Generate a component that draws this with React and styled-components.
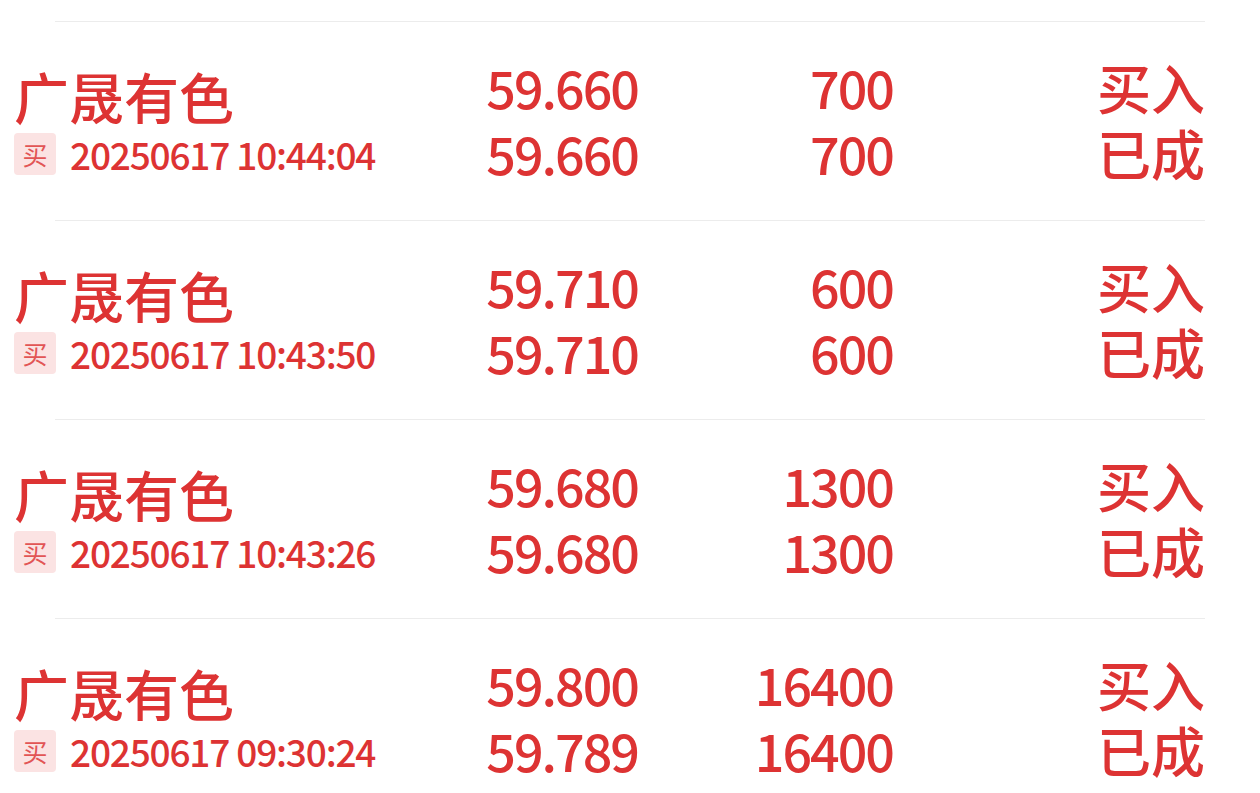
import React from "react";
import styled, { createGlobalStyle } from "styled-components";

const GlobalStyle = createGlobalStyle`
    body {
        margin: 0;
        background: #ffffff;
        font-family: "Noto Sans CJK SC", "Noto Sans", sans-serif;
    }
`;

const List = styled.section`
    padding-top: 21px;
    background: #ffffff;
`;

const Row = styled.div`
    height: 199px;
    display: flex;
    flex-direction: column;
`;

const Divider = styled.div`
    height: 1px;
    margin: 0 55px;
    background: #ececec;
`;

const Grid = styled.div`
    display: grid;
    grid-template-columns: 446px 178px 255px 312px;
    padding: 0 55px 0 14px;
    color: #dd3333;
`;

const NameCell = styled.div`
    display: flex;
    flex-direction: column;
    padding-top: 43px;
`;

const Name = styled.div`
    font-size: 55px;
    font-weight: 500;
    line-height: 60px;
    white-space: nowrap;
`;

const Meta = styled.div`
    display: flex;
    align-items: center;
    gap: 14px;
    margin-top: 8px;
    height: 42px;
`;

const Badge = styled.span`
    width: 42px;
    height: 42px;
    border-radius: 4px;
    background: #fbe3e3;
    color: #e25555;
    font-size: 25px;
    font-weight: 400;
    line-height: 42px;
    text-align: center;
`;

const Time = styled.span`
    font-size: 37px;
    font-weight: 500;
    line-height: 42px;
    letter-spacing: -1.2px;
    white-space: nowrap;
`;

const NumCell = styled.div`
    display: flex;
    flex-direction: column;
    align-items: flex-end;
    padding-top: 32px;
`;

const Num = styled.span`
    font-size: 52px;
    font-weight: 500;
    line-height: 66px;
    letter-spacing: -2px;
    white-space: nowrap;
`;

const Status = styled.span`
    font-size: 54px;
    font-weight: 500;
    line-height: 66px;
    white-space: nowrap;
`;

const orders = [
    { time: "20250617 10:44:04", price: "59.660", deal: "59.660", qty: "700", filled: "700" },
    { time: "20250617 10:43:50", price: "59.710", deal: "59.710", qty: "600", filled: "600" },
    { time: "20250617 10:43:26", price: "59.680", deal: "59.680", qty: "1300", filled: "1300" },
    { time: "20250617 09:30:24", price: "59.800", deal: "59.789", qty: "16400", filled: "16400" },
];

export default function App() {
    return (
        <List>
            <GlobalStyle />
            {orders.map((o) => (
                <Row key={o.time}>
                    <Divider />
                    <Grid>
                        <NameCell>
                            <Name>广晟有色</Name>
                            <Meta>
                                <Badge>买</Badge>
                                <Time>{o.time}</Time>
                            </Meta>
                        </NameCell>
                        <NumCell>
                            <Num>{o.price}</Num>
                            <Num>{o.deal}</Num>
                        </NumCell>
                        <NumCell>
                            <Num>{o.qty}</Num>
                            <Num>{o.filled}</Num>
                        </NumCell>
                        <NumCell>
                            <Status>买入</Status>
                            <Status>已成</Status>
                        </NumCell>
                    </Grid>
                </Row>
            ))}
        </List>
    );
}
